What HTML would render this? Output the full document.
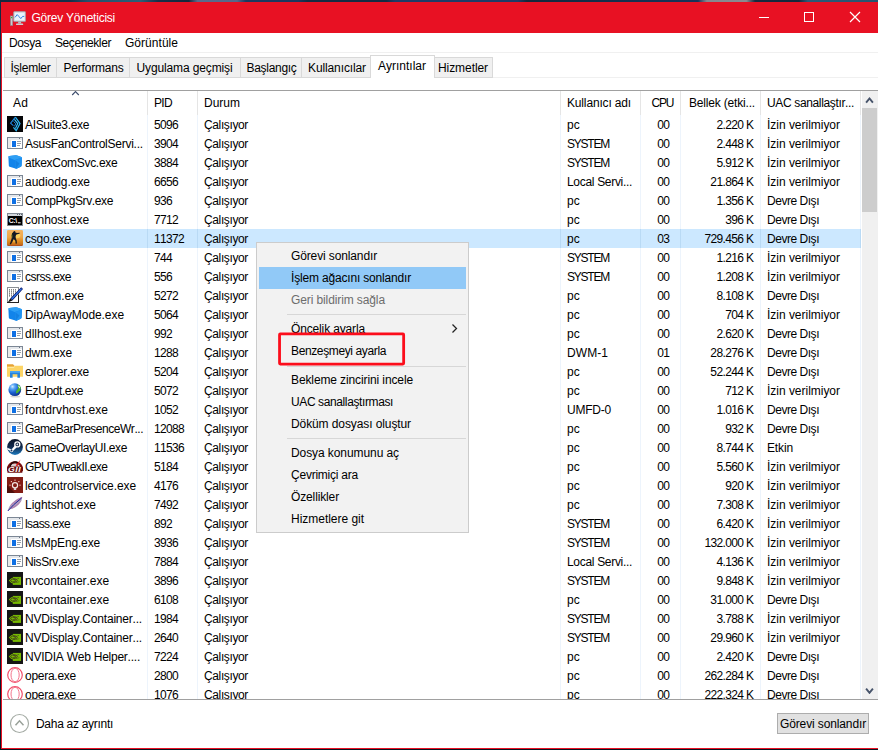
<!DOCTYPE html><html lang="tr"><head><meta charset="utf-8"><title>Görev Yöneticisi</title><style>
*{box-sizing:border-box}
html,body{margin:0;padding:0}
body{width:878px;height:750px;overflow:hidden;position:relative;background:#15304a;
 font-family:"Liberation Sans",sans-serif;font-size:12px;font-kerning:none;color:#000}
.a{position:absolute}
.t{position:absolute;white-space:nowrap;line-height:16px;height:16px}
.ic{position:absolute;display:block;overflow:hidden}
#bgtop{left:0;top:0;width:878px;height:2px;background:linear-gradient(90deg,#14293f 0,#15304a 8%,#24506c 10%,#2a6078 16%,#16304a 18%,#14283c 21.5%,#5a6b8c 22.5%,#56688a 27%,#1a3a60 28%,#1a3860 34%,#122c44 35%,#122c44 44%,#1e3c68 45%,#1e3c68 59%,#13283c 60%,#14304e 70%,#17345a 79.5%,#85878f 80.5%,#8a8a90 85%,#152a40 86%,#13283c 91%,#2a5a78 92%,#265470 100%)}
#bgleft{left:0;top:0;width:1px;height:750px;background:linear-gradient(180deg,#14293f 0,#163458 35%,#102a48 60%,#071624 100%)}
#bgbot{left:0;top:749px;width:878px;height:1px;background:#07131f}
#win{left:1px;top:2px;width:877px;height:747px;background:#fff}
#tb{left:1px;top:2px;width:877px;height:31px;background:#e81123}
#bl{left:1px;top:33px;width:1px;height:716px;background:#e81123}
#bb{left:1px;top:748px;width:877px;height:1px;background:#e81123}
.hl{position:absolute;height:1px}
.vl{position:absolute;width:1px}
.tab{position:absolute;top:57px;height:21px;background:#f0f0f0;border:1px solid #d9d9d9}
#list{left:3px;top:91px;width:858px;height:608px;overflow:hidden;background:#fff}
#menu{left:256px;top:242px;width:213px;height:291px;background:#f2f2f2;border:1px solid #ccc}
</style></head><body>
<div class="a" id="bgtop"></div><div class="a" id="bgleft"></div><div class="a" id="bgbot"></div>
<div class="a" id="win"></div>
<div class="a" id="tb"></div><div class="a" id="bl"></div><div class="a" id="bb"></div>
<svg class="ic" style="left:10px;top:11px" width="16" height="15" viewBox="0 0 16 15"><rect x="0.5" y="5" width="2.2" height="9.4" fill="#c9ccd0" stroke="#8c9096" stroke-width="0.6"/><rect x="1" y="6" width="1.2" height="1.2" fill="#3fae2a"/><rect x="3.6" y="0.6" width="12" height="10" rx="0.8" fill="#d5d9dd" stroke="#9aa0a6" stroke-width="0.7"/><rect x="4.8" y="1.8" width="9.6" height="7.4" fill="#e8f4fd"/><path d="M5 6.4 L7.2 3.6 L9 5.6 L10.8 7.6 L12.6 5.4 L14.2 5.4" fill="none" stroke="#2f7fe0" stroke-width="1"/><path d="M8.4 10.6 h2.4 l0.6 2 h-3.6z" fill="#b9bec4"/><rect x="6" y="12.6" width="7.2" height="1.4" rx="0.6" fill="#c9cdd2"/></svg>
<span class="t" style="top:9.5px;letter-spacing:-0.242px;color:#fff;left:31.5px;">Görev Yöneticisi</span>
<div class="a" style="left:759px;top:17px;width:10px;height:1px;background:#fff"></div>
<div class="a" style="left:804px;top:12px;width:10px;height:10px;border:1px solid #fff"></div>
<svg class="ic" style="left:849px;top:11px" width="12" height="12" viewBox="0 0 12 12"><path d="M1 1 L11 11 M11 1 L1 11" stroke="#fff" stroke-width="1.2" fill="none"/></svg>
<span class="t" style="top:34.5px;letter-spacing:-0.403px;left:9px;">Dosya</span>
<span class="t" style="top:34.5px;letter-spacing:-0.404px;left:55px;">Seçenekler</span>
<span class="t" style="top:34.5px;letter-spacing:0.033px;left:125px;">Görüntüle</span>
<div class="hl" style="left:2px;top:52px;width:876px;background:#f0f0f0"></div>
<div class="hl" style="left:2px;top:77px;width:876px;background:#f0f0f0"></div>
<div class="tab" style="left:4px;width:53px"></div>
<span class="t" style="top:59.5px;letter-spacing:-0.251px;left:10.5px;">İşlemler</span>
<div class="tab" style="left:56px;width:74px"></div>
<span class="t" style="top:59.5px;letter-spacing:-0.202px;left:63.5px;">Performans</span>
<div class="tab" style="left:129px;width:112px"></div>
<span class="t" style="top:59.5px;letter-spacing:-0.127px;left:136.5px;">Uygulama geçmişi</span>
<div class="tab" style="left:240px;width:62px"></div>
<span class="t" style="top:59.5px;letter-spacing:-0.3px;left:246.5px;">Başlangıç</span>
<div class="tab" style="left:301px;width:70px"></div>
<span class="t" style="top:59.5px;letter-spacing:-0.113px;left:308px;">Kullanıcılar</span>
<div class="tab" style="left:434px;width:59px"></div>
<span class="t" style="top:59.5px;letter-spacing:-0.075px;left:438px;">Hizmetler</span>
<div class="a" style="left:370px;top:55px;width:65px;height:23px;background:#fff;border:1px solid #d9d9d9;border-bottom:none"></div>
<span class="t" style="top:57.5px;letter-spacing:-0.001px;left:378px;">Ayrıntılar</span>
<div class="hl" style="left:3px;top:90px;width:875px;background:#a0a0a0"></div>
<div class="hl" style="left:3px;top:699px;width:875px;background:#a0a0a0"></div>
<div class="a" id="list">
<div class="a" style="left:-3px;top:-91px;width:878px;height:750px">
<div class="vl" style="left:147px;top:91px;height:24px;background:#e5e5e5"></div>
<div class="vl" style="left:147px;top:115px;height:584px;background:#edf4fc"></div>
<div class="vl" style="left:197px;top:91px;height:24px;background:#e5e5e5"></div>
<div class="vl" style="left:197px;top:115px;height:584px;background:#edf4fc"></div>
<div class="vl" style="left:560px;top:91px;height:24px;background:#e5e5e5"></div>
<div class="vl" style="left:560px;top:115px;height:584px;background:#edf4fc"></div>
<div class="vl" style="left:640px;top:91px;height:24px;background:#e5e5e5"></div>
<div class="vl" style="left:640px;top:115px;height:584px;background:#edf4fc"></div>
<div class="vl" style="left:680px;top:91px;height:24px;background:#e5e5e5"></div>
<div class="vl" style="left:680px;top:115px;height:584px;background:#edf4fc"></div>
<div class="vl" style="left:760px;top:91px;height:24px;background:#e5e5e5"></div>
<div class="vl" style="left:760px;top:115px;height:584px;background:#edf4fc"></div>
<div class="vl" style="left:860px;top:91px;height:24px;background:#e5e5e5"></div>
<div class="vl" style="left:860px;top:115px;height:584px;background:#edf4fc"></div>
<span class="t" style="top:94.5px;letter-spacing:0.161px;left:13px;">Ad</span>
<span class="t" style="top:94.5px;letter-spacing:-0.668px;left:154px;">PID</span>
<span class="t" style="top:94.5px;letter-spacing:-0.001px;left:204px;">Durum</span>
<span class="t" style="top:94.5px;letter-spacing:-0.157px;left:567px;">Kullanıcı adı</span>
<span class="t" style="top:94.5px;letter-spacing:-1.112px;right:204.612px;">CPU</span>
<span class="t" style="top:94.5px;letter-spacing:-0.179px;left:689px;">Bellek (etki...</span>
<span class="t" style="top:94.5px;letter-spacing:-0.354px;left:767px;">UAC sanallaştır...</span>
<svg class="ic" style="left:71px;top:91px" width="10" height="6" viewBox="0 0 10 6"><path d="M1.2 4 L4.5 0.6 L7.8 4" fill="none" stroke="#3d4c6c" stroke-width="1.15"/></svg>
<svg class="ic" style="left:7px;top:116px" width="16" height="16" viewBox="0 0 16 16"><rect width="16" height="16" fill="#050608"/><path d="M8.4 1.2 L3.6 7.2 L6.4 9.6" fill="none" stroke="#1f86e0" stroke-width="1.1"/><path d="M8.4 1.2 L13 7.6 L9.2 14.6 L6.4 11.4" fill="none" stroke="#2cb6f6" stroke-width="1.2"/><path d="M7.4 3.4 L10.8 7.6 L8.4 12.4" fill="none" stroke="#39c0fa" stroke-width="1.1"/><path d="M6.6 5.4 L8.8 7.8 L7.4 10.4" fill="none" stroke="#1f86e0" stroke-width="1"/></svg>
<span class="t" style="top:116.5px;letter-spacing:-0.337px;left:25px;">AISuite3.exe</span>
<span class="t" style="top:116.5px;letter-spacing:-0.674px;left:154px;">5096</span>
<span class="t" style="top:116.5px;letter-spacing:-0.372px;left:204px;">Çalışıyor</span>
<span class="t" style="top:116.5px;letter-spacing:0.163px;left:567px;">pc</span>
<span class="t" style="top:116.5px;letter-spacing:-0.674px;right:208.674px;">00</span>
<span class="t" style="top:116.5px;letter-spacing:-0.624px;right:124.624px;">2.220 K</span>
<span class="t" style="top:116.5px;letter-spacing:-0.023px;left:767px;">İzin verilmiyor</span>
<svg class="ic" style="left:7px;top:135px" width="16" height="16" viewBox="0 0 16 16"><g shape-rendering="crispEdges"><rect x="0" y="2" width="16" height="12" fill="#7c8795"/><rect x="1" y="3" width="14" height="10" fill="#fff"/><rect x="1" y="3" width="14" height="2" fill="#e4e7eb"/><rect x="1" y="5" width="3" height="8" fill="#e9e9e9"/><rect x="12" y="3" width="1" height="1" fill="#6a7380"/><rect x="5" y="6" width="4" height="6" fill="#0f70e4"/><rect x="10" y="6" width="4" height="1" fill="#98a0a8"/><rect x="10" y="8" width="4" height="1" fill="#98a0a8"/><rect x="10" y="10" width="3" height="1" fill="#98a0a8"/></g></svg>
<span class="t" style="top:135.5px;letter-spacing:-0.254px;left:25px;">AsusFanControlServi...</span>
<span class="t" style="top:135.5px;letter-spacing:-0.674px;left:154px;">3904</span>
<span class="t" style="top:135.5px;letter-spacing:-0.372px;left:204px;">Çalışıyor</span>
<span class="t" style="top:135.5px;letter-spacing:-1.224px;left:567px;">SYSTEM</span>
<span class="t" style="top:135.5px;letter-spacing:-0.674px;right:208.674px;">00</span>
<span class="t" style="top:135.5px;letter-spacing:-0.624px;right:124.624px;">2.448 K</span>
<span class="t" style="top:135.5px;letter-spacing:-0.023px;left:767px;">İzin verilmiyor</span>
<svg class="ic" style="left:7px;top:154px" width="16" height="16" viewBox="0 0 16 16"><path d="M1.4 3 Q1.4 2.2 2.4 2 L8.6 1.2 Q9.4 1.1 10.2 1.4 L14.4 3 Q15.1 3.3 15 4.2 L14.6 11.6 Q14.5 12.4 13.8 12.8 L10 14.6 Q9.2 14.9 8.4 14.6 L2.6 12.8 Q1.8 12.5 1.8 11.6Z" fill="#1284ea"/><path d="M1.4 3 Q1.4 2.2 2.4 2 L8.6 1.2 Q9.4 1.1 10.2 1.4 L14.4 3 Q15 3.3 14.8 3.8 L8.6 5.8 Q7.8 6 7 5.7 L1.6 3.6Z" fill="#2f9ff4"/><path d="M8 6 L14.9 3.8 L14.6 11.6 Q14.5 12.4 13.8 12.8 L10 14.6 Q9.2 14.9 8.6 14.7Z" fill="#1f93f2"/><path d="M8.4 6.2 L12.4 9.6 L9 14.4Z" fill="#1079dc" opacity="0.7"/></svg>
<span class="t" style="top:154.5px;letter-spacing:-0.287px;left:25px;">atkexComSvc.exe</span>
<span class="t" style="top:154.5px;letter-spacing:-0.674px;left:154px;">3884</span>
<span class="t" style="top:154.5px;letter-spacing:-0.372px;left:204px;">Çalışıyor</span>
<span class="t" style="top:154.5px;letter-spacing:-1.224px;left:567px;">SYSTEM</span>
<span class="t" style="top:154.5px;letter-spacing:-0.674px;right:208.674px;">00</span>
<span class="t" style="top:154.5px;letter-spacing:-0.624px;right:124.624px;">5.912 K</span>
<span class="t" style="top:154.5px;letter-spacing:-0.023px;left:767px;">İzin verilmiyor</span>
<svg class="ic" style="left:7px;top:173px" width="16" height="16" viewBox="0 0 16 16"><g shape-rendering="crispEdges"><rect x="0" y="2" width="16" height="12" fill="#7c8795"/><rect x="1" y="3" width="14" height="10" fill="#fff"/><rect x="1" y="3" width="14" height="2" fill="#e4e7eb"/><rect x="1" y="5" width="3" height="8" fill="#e9e9e9"/><rect x="12" y="3" width="1" height="1" fill="#6a7380"/><rect x="5" y="6" width="4" height="6" fill="#0f70e4"/><rect x="10" y="6" width="4" height="1" fill="#98a0a8"/><rect x="10" y="8" width="4" height="1" fill="#98a0a8"/><rect x="10" y="10" width="3" height="1" fill="#98a0a8"/></g></svg>
<span class="t" style="top:173.5px;letter-spacing:-0.036px;left:25px;">audiodg.exe</span>
<span class="t" style="top:173.5px;letter-spacing:-0.674px;left:154px;">6656</span>
<span class="t" style="top:173.5px;letter-spacing:-0.372px;left:204px;">Çalışıyor</span>
<span class="t" style="top:173.5px;letter-spacing:-0.312px;left:567px;">Local Servi...</span>
<span class="t" style="top:173.5px;letter-spacing:-0.674px;right:208.674px;">00</span>
<span class="t" style="top:173.5px;letter-spacing:-0.63px;right:124.63px;">21.864 K</span>
<span class="t" style="top:173.5px;letter-spacing:-0.023px;left:767px;">İzin verilmiyor</span>
<svg class="ic" style="left:7px;top:192px" width="16" height="16" viewBox="0 0 16 16"><g shape-rendering="crispEdges"><rect x="0" y="2" width="16" height="12" fill="#7c8795"/><rect x="1" y="3" width="14" height="10" fill="#fff"/><rect x="1" y="3" width="14" height="2" fill="#e4e7eb"/><rect x="1" y="5" width="3" height="8" fill="#e9e9e9"/><rect x="12" y="3" width="1" height="1" fill="#6a7380"/><rect x="5" y="6" width="4" height="6" fill="#0f70e4"/><rect x="10" y="6" width="4" height="1" fill="#98a0a8"/><rect x="10" y="8" width="4" height="1" fill="#98a0a8"/><rect x="10" y="10" width="3" height="1" fill="#98a0a8"/></g></svg>
<span class="t" style="top:192.5px;letter-spacing:-0.384px;left:25px;">CompPkgSrv.exe</span>
<span class="t" style="top:192.5px;letter-spacing:-0.674px;left:154px;">936</span>
<span class="t" style="top:192.5px;letter-spacing:-0.372px;left:204px;">Çalışıyor</span>
<span class="t" style="top:192.5px;letter-spacing:0.163px;left:567px;">pc</span>
<span class="t" style="top:192.5px;letter-spacing:-0.674px;right:208.674px;">00</span>
<span class="t" style="top:192.5px;letter-spacing:-0.624px;right:124.624px;">1.356 K</span>
<span class="t" style="top:192.5px;letter-spacing:-0.468px;left:767px;">Devre Dışı</span>
<svg class="ic" style="left:7px;top:211px" width="16" height="16" viewBox="0 0 16 16"><g shape-rendering="crispEdges"><rect x="0" y="2" width="16" height="13" fill="#828a94"/><rect x="1" y="3" width="14" height="2" fill="#d4d8dc"/><rect x="10" y="3" width="1" height="1" fill="#5c646e"/><rect x="12" y="3" width="1" height="1" fill="#5c646e"/><rect x="14" y="3" width="1" height="1" fill="#5c646e"/><rect x="1" y="5" width="14" height="9" fill="#000"/></g><text x="1.7" y="12" font-family="Liberation Sans, sans-serif" font-weight="bold" font-size="6.8" fill="#fff" letter-spacing="-0.25">C:\</text><rect x="11" y="11.3" width="2.6" height="1" fill="#fff"/></svg>
<span class="t" style="top:211.5px;letter-spacing:-0.065px;left:25px;">conhost.exe</span>
<span class="t" style="top:211.5px;letter-spacing:-0.674px;left:154px;">7712</span>
<span class="t" style="top:211.5px;letter-spacing:-0.372px;left:204px;">Çalışıyor</span>
<span class="t" style="top:211.5px;letter-spacing:0.163px;left:567px;">pc</span>
<span class="t" style="top:211.5px;letter-spacing:-0.674px;right:208.674px;">00</span>
<span class="t" style="top:211.5px;letter-spacing:-0.672px;right:124.672px;">396 K</span>
<span class="t" style="top:211.5px;letter-spacing:-0.468px;left:767px;">Devre Dışı</span>
<div class="a" style="left:3px;top:229px;width:858px;height:19px;background:#cce8ff"></div>
<div class="vl" style="left:147px;top:229px;height:19px;background:#b9daf5"></div>
<div class="vl" style="left:197px;top:229px;height:19px;background:#b9daf5"></div>
<div class="vl" style="left:560px;top:229px;height:19px;background:#b9daf5"></div>
<div class="vl" style="left:640px;top:229px;height:19px;background:#b9daf5"></div>
<div class="vl" style="left:680px;top:229px;height:19px;background:#b9daf5"></div>
<div class="vl" style="left:760px;top:229px;height:19px;background:#b9daf5"></div>
<div class="vl" style="left:860px;top:229px;height:19px;background:#b9daf5"></div>
<svg class="ic" style="left:7px;top:230px" width="16" height="16" viewBox="0 0 16 16"><defs><linearGradient id="csg" x1="0" y1="0" x2="0" y2="1"><stop offset="0" stop-color="#f4b462"/><stop offset="0.45" stop-color="#eea648"/><stop offset="0.7" stop-color="#dc8a22"/><stop offset="0.9" stop-color="#c8701c"/><stop offset="1" stop-color="#a84420"/></linearGradient></defs><rect width="16" height="16" rx="1.3" fill="url(#csg)"/><ellipse cx="10" cy="5.6" rx="3.4" ry="2.6" fill="#ffdc60" opacity="0.75"/><ellipse cx="5" cy="5" rx="1.4" ry="2.6" fill="#ffd458" opacity="0.6"/><ellipse cx="7.4" cy="11" rx="1.6" ry="1.6" fill="#ffd050" opacity="0.55"/><path d="M6.6 1.4 q0.9 -0.9 1.7 0 l0.1 1.1 l1.6 0.5 l2.6 -0.3 l0.2 0.7 l-2.4 0.8 l-1.3 0.6 l-0.5 1.8 l0.2 1.6 l0.9 2.2 l0.2 3.2 l-1.2 0.2 l-0.4 -3 l-1.6 -1.8 l-1.2 2.4 l-1.6 3 l-1.1 -0.4 l1.2 -3.4 l0.9 -3 l-0.2 -2 l0.2 -2.2 l1.2 -1.2z" fill="#131824"/><path d="M4.6 5 l1 -0.4 l0.2 2.8 l-1 0.4z" fill="#4a5a20"/></svg>
<span class="t" style="top:230.5px;letter-spacing:-0.254px;left:25px;">csgo.exe</span>
<span class="t" style="top:230.5px;letter-spacing:-0.674px;left:154px;">11372</span>
<span class="t" style="top:230.5px;letter-spacing:-0.372px;left:204px;">Çalışıyor</span>
<span class="t" style="top:230.5px;letter-spacing:0.163px;left:567px;">pc</span>
<span class="t" style="top:230.5px;letter-spacing:-0.674px;right:208.674px;">03</span>
<span class="t" style="top:230.5px;letter-spacing:-0.635px;right:124.635px;">729.456 K</span>
<span class="t" style="top:230.5px;letter-spacing:-0.468px;left:767px;">Devre Dışı</span>
<svg class="ic" style="left:7px;top:249px" width="16" height="16" viewBox="0 0 16 16"><g shape-rendering="crispEdges"><rect x="0" y="2" width="16" height="12" fill="#7c8795"/><rect x="1" y="3" width="14" height="10" fill="#fff"/><rect x="1" y="3" width="14" height="2" fill="#e4e7eb"/><rect x="1" y="5" width="3" height="8" fill="#e9e9e9"/><rect x="12" y="3" width="1" height="1" fill="#6a7380"/><rect x="5" y="6" width="4" height="6" fill="#0f70e4"/><rect x="10" y="6" width="4" height="1" fill="#98a0a8"/><rect x="10" y="8" width="4" height="1" fill="#98a0a8"/><rect x="10" y="10" width="3" height="1" fill="#98a0a8"/></g></svg>
<span class="t" style="top:249.5px;letter-spacing:-0.52px;left:25px;">csrss.exe</span>
<span class="t" style="top:249.5px;letter-spacing:-0.674px;left:154px;">744</span>
<span class="t" style="top:249.5px;letter-spacing:-0.372px;left:204px;">Çalışıyor</span>
<span class="t" style="top:249.5px;letter-spacing:-1.224px;left:567px;">SYSTEM</span>
<span class="t" style="top:249.5px;letter-spacing:-0.674px;right:208.674px;">00</span>
<span class="t" style="top:249.5px;letter-spacing:-0.624px;right:124.624px;">1.216 K</span>
<span class="t" style="top:249.5px;letter-spacing:-0.023px;left:767px;">İzin verilmiyor</span>
<svg class="ic" style="left:7px;top:268px" width="16" height="16" viewBox="0 0 16 16"><g shape-rendering="crispEdges"><rect x="0" y="2" width="16" height="12" fill="#7c8795"/><rect x="1" y="3" width="14" height="10" fill="#fff"/><rect x="1" y="3" width="14" height="2" fill="#e4e7eb"/><rect x="1" y="5" width="3" height="8" fill="#e9e9e9"/><rect x="12" y="3" width="1" height="1" fill="#6a7380"/><rect x="5" y="6" width="4" height="6" fill="#0f70e4"/><rect x="10" y="6" width="4" height="1" fill="#98a0a8"/><rect x="10" y="8" width="4" height="1" fill="#98a0a8"/><rect x="10" y="10" width="3" height="1" fill="#98a0a8"/></g></svg>
<span class="t" style="top:268.5px;letter-spacing:-0.52px;left:25px;">csrss.exe</span>
<span class="t" style="top:268.5px;letter-spacing:-0.674px;left:154px;">556</span>
<span class="t" style="top:268.5px;letter-spacing:-0.372px;left:204px;">Çalışıyor</span>
<span class="t" style="top:268.5px;letter-spacing:-1.224px;left:567px;">SYSTEM</span>
<span class="t" style="top:268.5px;letter-spacing:-0.674px;right:208.674px;">00</span>
<span class="t" style="top:268.5px;letter-spacing:-0.624px;right:124.624px;">1.208 K</span>
<span class="t" style="top:268.5px;letter-spacing:-0.023px;left:767px;">İzin verilmiyor</span>
<svg class="ic" style="left:7px;top:287px" width="16" height="16" viewBox="0 0 16 16"><rect x="0.5" y="0.5" width="11" height="15" fill="#fff" stroke="#8a8e94"/><path d="M0 15.5 H12 M11.5 8 V16" stroke="#222" stroke-width="1" fill="none"/><rect x="2" y="2.4" width="1" height="1" fill="#333"/><rect x="2" y="4.4" width="1" height="1" fill="#333"/><rect x="2" y="6.4" width="1" height="1" fill="#333"/><rect x="2" y="8.4" width="1" height="1" fill="#333"/><rect x="4" y="2.4" width="1" height="1" fill="#333"/><rect x="4" y="4.4" width="1" height="1" fill="#333"/><rect x="4" y="6.4" width="1" height="1" fill="#333"/><rect x="4" y="8.4" width="1" height="1" fill="#333"/><rect x="6" y="2.4" width="1" height="1" fill="#333"/><rect x="6" y="4.4" width="1" height="1" fill="#333"/><rect x="6" y="6.4" width="1" height="1" fill="#333"/><rect x="6" y="8.4" width="1" height="1" fill="#333"/><rect x="8" y="2.4" width="1" height="1" fill="#333"/><rect x="8" y="4.4" width="1" height="1" fill="#333"/><rect x="8" y="6.4" width="1" height="1" fill="#333"/><rect x="8" y="8.4" width="1" height="1" fill="#333"/><path d="M14.2 0.2 L16 2 L5.4 13.4 L3.2 11.4Z" fill="#0c1868"/><path d="M14.6 1.6 L4.8 12" stroke="#2f7af2" stroke-width="1.1" fill="none"/><path d="M3.2 11.4 L5.4 13.4 L0.8 15.4Z" fill="#0a0a0a"/></svg>
<span class="t" style="top:287.5px;letter-spacing:0.031px;left:25px;">ctfmon.exe</span>
<span class="t" style="top:287.5px;letter-spacing:-0.674px;left:154px;">5272</span>
<span class="t" style="top:287.5px;letter-spacing:-0.372px;left:204px;">Çalışıyor</span>
<span class="t" style="top:287.5px;letter-spacing:0.163px;left:567px;">pc</span>
<span class="t" style="top:287.5px;letter-spacing:-0.674px;right:208.674px;">00</span>
<span class="t" style="top:287.5px;letter-spacing:-0.624px;right:124.624px;">8.108 K</span>
<span class="t" style="top:287.5px;letter-spacing:-0.468px;left:767px;">Devre Dışı</span>
<svg class="ic" style="left:7px;top:306px" width="16" height="16" viewBox="0 0 16 16"><path d="M1.4 3 Q1.4 2.2 2.4 2 L8.6 1.2 Q9.4 1.1 10.2 1.4 L14.4 3 Q15.1 3.3 15 4.2 L14.6 11.6 Q14.5 12.4 13.8 12.8 L10 14.6 Q9.2 14.9 8.4 14.6 L2.6 12.8 Q1.8 12.5 1.8 11.6Z" fill="#1284ea"/><path d="M1.4 3 Q1.4 2.2 2.4 2 L8.6 1.2 Q9.4 1.1 10.2 1.4 L14.4 3 Q15 3.3 14.8 3.8 L8.6 5.8 Q7.8 6 7 5.7 L1.6 3.6Z" fill="#2f9ff4"/><path d="M8 6 L14.9 3.8 L14.6 11.6 Q14.5 12.4 13.8 12.8 L10 14.6 Q9.2 14.9 8.6 14.7Z" fill="#1f93f2"/><path d="M8.4 6.2 L12.4 9.6 L9 14.4Z" fill="#1079dc" opacity="0.7"/></svg>
<span class="t" style="top:306.5px;letter-spacing:-0.07px;left:25px;">DipAwayMode.exe</span>
<span class="t" style="top:306.5px;letter-spacing:-0.674px;left:154px;">5064</span>
<span class="t" style="top:306.5px;letter-spacing:-0.372px;left:204px;">Çalışıyor</span>
<span class="t" style="top:306.5px;letter-spacing:0.163px;left:567px;">pc</span>
<span class="t" style="top:306.5px;letter-spacing:-0.674px;right:208.674px;">00</span>
<span class="t" style="top:306.5px;letter-spacing:-0.672px;right:124.672px;">704 K</span>
<span class="t" style="top:306.5px;letter-spacing:-0.023px;left:767px;">İzin verilmiyor</span>
<svg class="ic" style="left:7px;top:325px" width="16" height="16" viewBox="0 0 16 16"><g shape-rendering="crispEdges"><rect x="0" y="2" width="16" height="12" fill="#7c8795"/><rect x="1" y="3" width="14" height="10" fill="#fff"/><rect x="1" y="3" width="14" height="2" fill="#e4e7eb"/><rect x="1" y="5" width="3" height="8" fill="#e9e9e9"/><rect x="12" y="3" width="1" height="1" fill="#6a7380"/><rect x="5" y="6" width="4" height="6" fill="#0f70e4"/><rect x="10" y="6" width="4" height="1" fill="#98a0a8"/><rect x="10" y="8" width="4" height="1" fill="#98a0a8"/><rect x="10" y="10" width="3" height="1" fill="#98a0a8"/></g></svg>
<span class="t" style="top:325.5px;letter-spacing:-0.034px;left:25px;">dllhost.exe</span>
<span class="t" style="top:325.5px;letter-spacing:-0.674px;left:154px;">992</span>
<span class="t" style="top:325.5px;letter-spacing:-0.372px;left:204px;">Çalışıyor</span>
<span class="t" style="top:325.5px;letter-spacing:0.163px;left:567px;">pc</span>
<span class="t" style="top:325.5px;letter-spacing:-0.674px;right:208.674px;">00</span>
<span class="t" style="top:325.5px;letter-spacing:-0.624px;right:124.624px;">2.620 K</span>
<span class="t" style="top:325.5px;letter-spacing:-0.468px;left:767px;">Devre Dışı</span>
<svg class="ic" style="left:7px;top:344px" width="16" height="16" viewBox="0 0 16 16"><g shape-rendering="crispEdges"><rect x="0" y="2" width="16" height="12" fill="#7c8795"/><rect x="1" y="3" width="14" height="10" fill="#fff"/><rect x="1" y="3" width="14" height="2" fill="#e4e7eb"/><rect x="1" y="5" width="3" height="8" fill="#e9e9e9"/><rect x="12" y="3" width="1" height="1" fill="#6a7380"/><rect x="5" y="6" width="4" height="6" fill="#0f70e4"/><rect x="10" y="6" width="4" height="1" fill="#98a0a8"/><rect x="10" y="8" width="4" height="1" fill="#98a0a8"/><rect x="10" y="10" width="3" height="1" fill="#98a0a8"/></g></svg>
<span class="t" style="top:344.5px;letter-spacing:-0.145px;left:25px;">dwm.exe</span>
<span class="t" style="top:344.5px;letter-spacing:-0.674px;left:154px;">1288</span>
<span class="t" style="top:344.5px;letter-spacing:-0.372px;left:204px;">Çalışıyor</span>
<span class="t" style="top:344.5px;letter-spacing:0.068px;left:567px;">DWM-1</span>
<span class="t" style="top:344.5px;letter-spacing:-0.674px;right:208.674px;">01</span>
<span class="t" style="top:344.5px;letter-spacing:-0.63px;right:124.63px;">28.276 K</span>
<span class="t" style="top:344.5px;letter-spacing:-0.468px;left:767px;">Devre Dışı</span>
<svg class="ic" style="left:7px;top:363px" width="16" height="16" viewBox="0 0 16 16"><path d="M0 1.2 h6 l1.2 1.4 v2 h-7.2z" fill="#e6a235"/><path d="M0 3.6 h7.4 l0.8 -0.8 h7.8 v11 h-16z" fill="#fcd465"/><path d="M0.8 4.4 h6.4" stroke="#fff2c0" stroke-width="0.7"/><path d="M3 8 h10 v6.8 h-2.6 v-3.6 h-4.8 v3.6 h-2.6z" fill="#2583dc"/><path d="M3 8 h10 v1.8 h-10z" fill="#4aa6f2"/></svg>
<span class="t" style="top:363.5px;letter-spacing:-0.17px;left:25px;">explorer.exe</span>
<span class="t" style="top:363.5px;letter-spacing:-0.674px;left:154px;">5204</span>
<span class="t" style="top:363.5px;letter-spacing:-0.372px;left:204px;">Çalışıyor</span>
<span class="t" style="top:363.5px;letter-spacing:0.163px;left:567px;">pc</span>
<span class="t" style="top:363.5px;letter-spacing:-0.674px;right:208.674px;">00</span>
<span class="t" style="top:363.5px;letter-spacing:-0.63px;right:124.63px;">52.244 K</span>
<span class="t" style="top:363.5px;letter-spacing:-0.468px;left:767px;">Devre Dışı</span>
<svg class="ic" style="left:7px;top:382px" width="16" height="16" viewBox="0 0 16 16"><defs><radialGradient id="glg" cx="0.32" cy="0.26" r="0.85"><stop offset="0" stop-color="#d8ecff"/><stop offset="0.22" stop-color="#5aa8f5"/><stop offset="0.55" stop-color="#1a5fd0"/><stop offset="1" stop-color="#0a2a80"/></radialGradient></defs><ellipse cx="8.4" cy="14.6" rx="5" ry="1" fill="#b8b8b8" opacity="0.6"/><circle cx="7.8" cy="7.7" r="6.4" fill="url(#glg)"/><path d="M10.4 2.2 Q12.8 3.2 13.8 5.6 L13.4 8.4 Q12 9 11.2 10.4 L9.4 11.6 Q8.6 10.4 9.2 9 Q9.8 7.6 11 6.8 Q11.6 5.4 10.8 4.2Z" fill="#4fb52e"/><path d="M11.6 3.4 Q12.8 4.4 13.2 5.8 L12.2 6.6 Q12 5 11.2 4.2Z" fill="#e9f7c8"/></svg>
<span class="t" style="top:382.5px;letter-spacing:-0.403px;left:25px;">EzUpdt.exe</span>
<span class="t" style="top:382.5px;letter-spacing:-0.674px;left:154px;">5072</span>
<span class="t" style="top:382.5px;letter-spacing:-0.372px;left:204px;">Çalışıyor</span>
<span class="t" style="top:382.5px;letter-spacing:0.163px;left:567px;">pc</span>
<span class="t" style="top:382.5px;letter-spacing:-0.674px;right:208.674px;">00</span>
<span class="t" style="top:382.5px;letter-spacing:-0.672px;right:124.672px;">712 K</span>
<span class="t" style="top:382.5px;letter-spacing:-0.023px;left:767px;">İzin verilmiyor</span>
<svg class="ic" style="left:7px;top:401px" width="16" height="16" viewBox="0 0 16 16"><g shape-rendering="crispEdges"><rect x="0" y="2" width="16" height="12" fill="#7c8795"/><rect x="1" y="3" width="14" height="10" fill="#fff"/><rect x="1" y="3" width="14" height="2" fill="#e4e7eb"/><rect x="1" y="5" width="3" height="8" fill="#e9e9e9"/><rect x="12" y="3" width="1" height="1" fill="#6a7380"/><rect x="5" y="6" width="4" height="6" fill="#0f70e4"/><rect x="10" y="6" width="4" height="1" fill="#98a0a8"/><rect x="10" y="8" width="4" height="1" fill="#98a0a8"/><rect x="10" y="10" width="3" height="1" fill="#98a0a8"/></g></svg>
<span class="t" style="top:401.5px;letter-spacing:0.063px;left:25px;">fontdrvhost.exe</span>
<span class="t" style="top:401.5px;letter-spacing:-0.674px;left:154px;">1052</span>
<span class="t" style="top:401.5px;letter-spacing:-0.372px;left:204px;">Çalışıyor</span>
<span class="t" style="top:401.5px;letter-spacing:-0.221px;left:567px;">UMFD-0</span>
<span class="t" style="top:401.5px;letter-spacing:-0.674px;right:208.674px;">00</span>
<span class="t" style="top:401.5px;letter-spacing:-0.624px;right:124.624px;">1.016 K</span>
<span class="t" style="top:401.5px;letter-spacing:-0.468px;left:767px;">Devre Dışı</span>
<svg class="ic" style="left:7px;top:420px" width="16" height="16" viewBox="0 0 16 16"><g shape-rendering="crispEdges"><rect x="0" y="2" width="16" height="12" fill="#7c8795"/><rect x="1" y="3" width="14" height="10" fill="#fff"/><rect x="1" y="3" width="14" height="2" fill="#e4e7eb"/><rect x="1" y="5" width="3" height="8" fill="#e9e9e9"/><rect x="12" y="3" width="1" height="1" fill="#6a7380"/><rect x="5" y="6" width="4" height="6" fill="#0f70e4"/><rect x="10" y="6" width="4" height="1" fill="#98a0a8"/><rect x="10" y="8" width="4" height="1" fill="#98a0a8"/><rect x="10" y="10" width="3" height="1" fill="#98a0a8"/></g></svg>
<span class="t" style="top:420.5px;letter-spacing:-0.469px;left:25px;">GameBarPresenceWr...</span>
<span class="t" style="top:420.5px;letter-spacing:-0.674px;left:154px;">12088</span>
<span class="t" style="top:420.5px;letter-spacing:-0.372px;left:204px;">Çalışıyor</span>
<span class="t" style="top:420.5px;letter-spacing:0.163px;left:567px;">pc</span>
<span class="t" style="top:420.5px;letter-spacing:-0.674px;right:208.674px;">00</span>
<span class="t" style="top:420.5px;letter-spacing:-0.672px;right:124.672px;">932 K</span>
<span class="t" style="top:420.5px;letter-spacing:-0.468px;left:767px;">Devre Dışı</span>
<svg class="ic" style="left:7px;top:439px" width="16" height="16" viewBox="0 0 16 16"><defs><linearGradient id="stg" x1="0" y1="0" x2="0" y2="1"><stop offset="0" stop-color="#0b1426"/><stop offset="0.5" stop-color="#112a4e"/><stop offset="1" stop-color="#1c78bc"/></linearGradient></defs><circle cx="8" cy="8" r="7.9" fill="url(#stg)"/><circle cx="10.3" cy="5.4" r="2.5" fill="none" stroke="#fff" stroke-width="1.3"/><circle cx="10.3" cy="5.4" r="0.9" fill="#e8eef5"/><path d="M0.3 8.8 L4.6 10.4 L7.8 6.6 L9.6 8.6 L6.4 11.4 Q6 13.4 4.2 13.1 Q2.8 12.8 2.8 11.4 L0.5 10.4Z" fill="#fff"/><circle cx="4.5" cy="11.6" r="1" fill="#14305a"/></svg>
<span class="t" style="top:439.5px;letter-spacing:-0.394px;left:25px;">GameOverlayUI.exe</span>
<span class="t" style="top:439.5px;letter-spacing:-0.674px;left:154px;">11536</span>
<span class="t" style="top:439.5px;letter-spacing:-0.372px;left:204px;">Çalışıyor</span>
<span class="t" style="top:439.5px;letter-spacing:0.163px;left:567px;">pc</span>
<span class="t" style="top:439.5px;letter-spacing:-0.674px;right:208.674px;">00</span>
<span class="t" style="top:439.5px;letter-spacing:-0.624px;right:124.624px;">8.744 K</span>
<span class="t" style="top:439.5px;letter-spacing:-0.136px;left:767px;">Etkin</span>
<svg class="ic" style="left:7px;top:458px" width="16" height="16" viewBox="0 0 16 16"><path d="M1.2 13 A7 7 0 1 1 14.8 13" fill="#d8d0d0" stroke="#7a0e0e" stroke-width="2.2"/><path d="M3.6 10 A4.6 4.6 0 0 1 11 5.2" fill="none" stroke="#1a0a0a" stroke-width="1.2"/><path d="M8.6 7.4 L13.6 1.4 L10.4 8.2Z" fill="#e01818"/><rect x="0.4" y="8.6" width="15" height="6.2" rx="0.6" fill="#6a0c0c"/><text x="0.9" y="14.2" font-family="Liberation Sans, sans-serif" font-weight="bold" font-style="italic" font-size="7.6" fill="#fff" letter-spacing="0.5" textLength="13.4" lengthAdjust="spacingAndGlyphs">GII</text></svg>
<span class="t" style="top:458.5px;letter-spacing:-0.607px;left:25px;">GPUTweakII.exe</span>
<span class="t" style="top:458.5px;letter-spacing:-0.674px;left:154px;">5184</span>
<span class="t" style="top:458.5px;letter-spacing:-0.372px;left:204px;">Çalışıyor</span>
<span class="t" style="top:458.5px;letter-spacing:0.163px;left:567px;">pc</span>
<span class="t" style="top:458.5px;letter-spacing:-0.674px;right:208.674px;">00</span>
<span class="t" style="top:458.5px;letter-spacing:-0.624px;right:124.624px;">5.560 K</span>
<span class="t" style="top:458.5px;letter-spacing:-0.023px;left:767px;">İzin verilmiyor</span>
<svg class="ic" style="left:7px;top:477px" width="16" height="16" viewBox="0 0 16 16"><rect width="16" height="16" fill="#821c14"/><path d="M0 8 L8 16 H0Z" fill="#4e0e0a"/><circle cx="8" cy="8.2" r="2.6" fill="none" stroke="#f2e4e0" stroke-width="1.2"/><rect x="6.8" y="10.6" width="2.4" height="2.4" fill="#d9d0d0"/><rect x="7.4" y="2.6" width="1.2" height="1.2" fill="#e8c0b8"/><rect x="2.4" y="7.6" width="1.2" height="1.2" fill="#e8c0b8"/><rect x="12.4" y="7.6" width="1.2" height="1.2" fill="#e8c0b8"/><rect x="3.8" y="4" width="1.2" height="1.2" fill="#e8c0b8"/><rect x="11.2" y="4" width="1.2" height="1.2" fill="#e8c0b8"/></svg>
<span class="t" style="top:477.5px;letter-spacing:-0.082px;left:25px;">ledcontrolservice.exe</span>
<span class="t" style="top:477.5px;letter-spacing:-0.674px;left:154px;">4176</span>
<span class="t" style="top:477.5px;letter-spacing:-0.372px;left:204px;">Çalışıyor</span>
<span class="t" style="top:477.5px;letter-spacing:0.163px;left:567px;">pc</span>
<span class="t" style="top:477.5px;letter-spacing:-0.674px;right:208.674px;">00</span>
<span class="t" style="top:477.5px;letter-spacing:-0.672px;right:124.672px;">920 K</span>
<span class="t" style="top:477.5px;letter-spacing:-0.023px;left:767px;">İzin verilmiyor</span>
<svg class="ic" style="left:7px;top:496px" width="16" height="16" viewBox="0 0 16 16"><path d="M1 14.8 Q1.2 11.2 5 7 Q9.2 2.6 15.2 0.8 Q15.6 4.6 11.8 8.6 Q7.8 12.6 2.6 13.4 Z" fill="#a99dbd"/><path d="M3.4 9.4 Q8 4.6 14.8 1.4 M4.6 12.4 Q10.4 9.4 13.6 5.6" fill="none" stroke="#c2609e" stroke-width="0.8" opacity="0.75"/><path d="M0.8 15 Q5.6 9 14.6 2" fill="none" stroke="#2a1f9a" stroke-width="1"/></svg>
<span class="t" style="top:496.5px;letter-spacing:-0.03px;left:25px;">Lightshot.exe</span>
<span class="t" style="top:496.5px;letter-spacing:-0.674px;left:154px;">7492</span>
<span class="t" style="top:496.5px;letter-spacing:-0.372px;left:204px;">Çalışıyor</span>
<span class="t" style="top:496.5px;letter-spacing:0.163px;left:567px;">pc</span>
<span class="t" style="top:496.5px;letter-spacing:-0.674px;right:208.674px;">00</span>
<span class="t" style="top:496.5px;letter-spacing:-0.624px;right:124.624px;">7.308 K</span>
<span class="t" style="top:496.5px;letter-spacing:-0.023px;left:767px;">İzin verilmiyor</span>
<svg class="ic" style="left:7px;top:515px" width="16" height="16" viewBox="0 0 16 16"><g shape-rendering="crispEdges"><rect x="0" y="2" width="16" height="12" fill="#7c8795"/><rect x="1" y="3" width="14" height="10" fill="#fff"/><rect x="1" y="3" width="14" height="2" fill="#e4e7eb"/><rect x="1" y="5" width="3" height="8" fill="#e9e9e9"/><rect x="12" y="3" width="1" height="1" fill="#6a7380"/><rect x="5" y="6" width="4" height="6" fill="#0f70e4"/><rect x="10" y="6" width="4" height="1" fill="#98a0a8"/><rect x="10" y="8" width="4" height="1" fill="#98a0a8"/><rect x="10" y="10" width="3" height="1" fill="#98a0a8"/></g></svg>
<span class="t" style="top:515.5px;letter-spacing:-0.558px;left:25px;">lsass.exe</span>
<span class="t" style="top:515.5px;letter-spacing:-0.674px;left:154px;">892</span>
<span class="t" style="top:515.5px;letter-spacing:-0.372px;left:204px;">Çalışıyor</span>
<span class="t" style="top:515.5px;letter-spacing:-1.224px;left:567px;">SYSTEM</span>
<span class="t" style="top:515.5px;letter-spacing:-0.674px;right:208.674px;">00</span>
<span class="t" style="top:515.5px;letter-spacing:-0.624px;right:124.624px;">6.420 K</span>
<span class="t" style="top:515.5px;letter-spacing:-0.023px;left:767px;">İzin verilmiyor</span>
<svg class="ic" style="left:7px;top:534px" width="16" height="16" viewBox="0 0 16 16"><g shape-rendering="crispEdges"><rect x="0" y="2" width="16" height="12" fill="#7c8795"/><rect x="1" y="3" width="14" height="10" fill="#fff"/><rect x="1" y="3" width="14" height="2" fill="#e4e7eb"/><rect x="1" y="5" width="3" height="8" fill="#e9e9e9"/><rect x="12" y="3" width="1" height="1" fill="#6a7380"/><rect x="5" y="6" width="4" height="6" fill="#0f70e4"/><rect x="10" y="6" width="4" height="1" fill="#98a0a8"/><rect x="10" y="8" width="4" height="1" fill="#98a0a8"/><rect x="10" y="10" width="3" height="1" fill="#98a0a8"/></g></svg>
<span class="t" style="top:534.5px;letter-spacing:-0.155px;left:25px;">MsMpEng.exe</span>
<span class="t" style="top:534.5px;letter-spacing:-0.674px;left:154px;">3936</span>
<span class="t" style="top:534.5px;letter-spacing:-0.372px;left:204px;">Çalışıyor</span>
<span class="t" style="top:534.5px;letter-spacing:-1.224px;left:567px;">SYSTEM</span>
<span class="t" style="top:534.5px;letter-spacing:-0.674px;right:208.674px;">00</span>
<span class="t" style="top:534.5px;letter-spacing:-0.635px;right:124.635px;">132.000 K</span>
<span class="t" style="top:534.5px;letter-spacing:-0.023px;left:767px;">İzin verilmiyor</span>
<svg class="ic" style="left:7px;top:553px" width="16" height="16" viewBox="0 0 16 16"><g shape-rendering="crispEdges"><rect x="0" y="2" width="16" height="12" fill="#7c8795"/><rect x="1" y="3" width="14" height="10" fill="#fff"/><rect x="1" y="3" width="14" height="2" fill="#e4e7eb"/><rect x="1" y="5" width="3" height="8" fill="#e9e9e9"/><rect x="12" y="3" width="1" height="1" fill="#6a7380"/><rect x="5" y="6" width="4" height="6" fill="#0f70e4"/><rect x="10" y="6" width="4" height="1" fill="#98a0a8"/><rect x="10" y="8" width="4" height="1" fill="#98a0a8"/><rect x="10" y="10" width="3" height="1" fill="#98a0a8"/></g></svg>
<span class="t" style="top:553.5px;letter-spacing:-0.401px;left:25px;">NisSrv.exe</span>
<span class="t" style="top:553.5px;letter-spacing:-0.674px;left:154px;">7884</span>
<span class="t" style="top:553.5px;letter-spacing:-0.372px;left:204px;">Çalışıyor</span>
<span class="t" style="top:553.5px;letter-spacing:-0.312px;left:567px;">Local Servi...</span>
<span class="t" style="top:553.5px;letter-spacing:-0.674px;right:208.674px;">00</span>
<span class="t" style="top:553.5px;letter-spacing:-0.624px;right:124.624px;">4.136 K</span>
<span class="t" style="top:553.5px;letter-spacing:-0.023px;left:767px;">İzin verilmiyor</span>
<svg class="ic" style="left:7px;top:572px" width="16" height="16" viewBox="0 0 16 16"><rect width="16" height="16" fill="#151515"/><g transform="translate(0,0.9)"><rect x="5.8" y="4" width="8.2" height="8" fill="#76b900"/><path d="M1.8 7.6 Q4 4.6 7.4 4.6 Q10.4 4.8 12 7.2 Q10.6 10.6 7.2 10.8 Q3.8 10.6 1.8 7.6z" fill="#76b900"/><path d="M3.4 7.6 Q5 5.8 7.4 5.8 Q9.4 6 10.4 7.4 Q9.4 9.4 7.2 9.6 Q4.8 9.4 3.4 7.6z" fill="none" stroke="#3a2a20" stroke-width="0.8"/><path d="M6 6 Q8.6 6.6 8.4 8.2 Q7.6 9.2 6.4 8.6" fill="none" stroke="#3a2a20" stroke-width="0.8"/><path d="M8 7 L12 5.4 M9 9.6 L12.4 8.8" stroke="#4a3a2a" stroke-width="0.6"/></g></svg>
<span class="t" style="top:572.5px;letter-spacing:-0.048px;left:25px;">nvcontainer.exe</span>
<span class="t" style="top:572.5px;letter-spacing:-0.674px;left:154px;">3896</span>
<span class="t" style="top:572.5px;letter-spacing:-0.372px;left:204px;">Çalışıyor</span>
<span class="t" style="top:572.5px;letter-spacing:-1.224px;left:567px;">SYSTEM</span>
<span class="t" style="top:572.5px;letter-spacing:-0.674px;right:208.674px;">00</span>
<span class="t" style="top:572.5px;letter-spacing:-0.624px;right:124.624px;">9.848 K</span>
<span class="t" style="top:572.5px;letter-spacing:-0.023px;left:767px;">İzin verilmiyor</span>
<svg class="ic" style="left:7px;top:591px" width="16" height="16" viewBox="0 0 16 16"><rect width="16" height="16" fill="#151515"/><g transform="translate(0,0.9)"><rect x="5.8" y="4" width="8.2" height="8" fill="#76b900"/><path d="M1.8 7.6 Q4 4.6 7.4 4.6 Q10.4 4.8 12 7.2 Q10.6 10.6 7.2 10.8 Q3.8 10.6 1.8 7.6z" fill="#76b900"/><path d="M3.4 7.6 Q5 5.8 7.4 5.8 Q9.4 6 10.4 7.4 Q9.4 9.4 7.2 9.6 Q4.8 9.4 3.4 7.6z" fill="none" stroke="#3a2a20" stroke-width="0.8"/><path d="M6 6 Q8.6 6.6 8.4 8.2 Q7.6 9.2 6.4 8.6" fill="none" stroke="#3a2a20" stroke-width="0.8"/><path d="M8 7 L12 5.4 M9 9.6 L12.4 8.8" stroke="#4a3a2a" stroke-width="0.6"/></g></svg>
<span class="t" style="top:591.5px;letter-spacing:-0.048px;left:25px;">nvcontainer.exe</span>
<span class="t" style="top:591.5px;letter-spacing:-0.674px;left:154px;">6108</span>
<span class="t" style="top:591.5px;letter-spacing:-0.372px;left:204px;">Çalışıyor</span>
<span class="t" style="top:591.5px;letter-spacing:0.163px;left:567px;">pc</span>
<span class="t" style="top:591.5px;letter-spacing:-0.674px;right:208.674px;">00</span>
<span class="t" style="top:591.5px;letter-spacing:-0.63px;right:124.63px;">31.000 K</span>
<span class="t" style="top:591.5px;letter-spacing:-0.468px;left:767px;">Devre Dışı</span>
<svg class="ic" style="left:7px;top:610px" width="16" height="16" viewBox="0 0 16 16"><rect width="16" height="16" fill="#151515"/><g transform="translate(0,0.9)"><rect x="5.8" y="4" width="8.2" height="8" fill="#76b900"/><path d="M1.8 7.6 Q4 4.6 7.4 4.6 Q10.4 4.8 12 7.2 Q10.6 10.6 7.2 10.8 Q3.8 10.6 1.8 7.6z" fill="#76b900"/><path d="M3.4 7.6 Q5 5.8 7.4 5.8 Q9.4 6 10.4 7.4 Q9.4 9.4 7.2 9.6 Q4.8 9.4 3.4 7.6z" fill="none" stroke="#3a2a20" stroke-width="0.8"/><path d="M6 6 Q8.6 6.6 8.4 8.2 Q7.6 9.2 6.4 8.6" fill="none" stroke="#3a2a20" stroke-width="0.8"/><path d="M8 7 L12 5.4 M9 9.6 L12.4 8.8" stroke="#4a3a2a" stroke-width="0.6"/></g></svg>
<span class="t" style="top:610.5px;letter-spacing:-0.199px;left:25px;">NVDisplay.Container...</span>
<span class="t" style="top:610.5px;letter-spacing:-0.674px;left:154px;">1984</span>
<span class="t" style="top:610.5px;letter-spacing:-0.372px;left:204px;">Çalışıyor</span>
<span class="t" style="top:610.5px;letter-spacing:-1.224px;left:567px;">SYSTEM</span>
<span class="t" style="top:610.5px;letter-spacing:-0.674px;right:208.674px;">00</span>
<span class="t" style="top:610.5px;letter-spacing:-0.624px;right:124.624px;">3.788 K</span>
<span class="t" style="top:610.5px;letter-spacing:-0.023px;left:767px;">İzin verilmiyor</span>
<svg class="ic" style="left:7px;top:629px" width="16" height="16" viewBox="0 0 16 16"><rect width="16" height="16" fill="#151515"/><g transform="translate(0,0.9)"><rect x="5.8" y="4" width="8.2" height="8" fill="#76b900"/><path d="M1.8 7.6 Q4 4.6 7.4 4.6 Q10.4 4.8 12 7.2 Q10.6 10.6 7.2 10.8 Q3.8 10.6 1.8 7.6z" fill="#76b900"/><path d="M3.4 7.6 Q5 5.8 7.4 5.8 Q9.4 6 10.4 7.4 Q9.4 9.4 7.2 9.6 Q4.8 9.4 3.4 7.6z" fill="none" stroke="#3a2a20" stroke-width="0.8"/><path d="M6 6 Q8.6 6.6 8.4 8.2 Q7.6 9.2 6.4 8.6" fill="none" stroke="#3a2a20" stroke-width="0.8"/><path d="M8 7 L12 5.4 M9 9.6 L12.4 8.8" stroke="#4a3a2a" stroke-width="0.6"/></g></svg>
<span class="t" style="top:629.5px;letter-spacing:-0.199px;left:25px;">NVDisplay.Container...</span>
<span class="t" style="top:629.5px;letter-spacing:-0.674px;left:154px;">2640</span>
<span class="t" style="top:629.5px;letter-spacing:-0.372px;left:204px;">Çalışıyor</span>
<span class="t" style="top:629.5px;letter-spacing:-1.224px;left:567px;">SYSTEM</span>
<span class="t" style="top:629.5px;letter-spacing:-0.674px;right:208.674px;">00</span>
<span class="t" style="top:629.5px;letter-spacing:-0.63px;right:124.63px;">29.960 K</span>
<span class="t" style="top:629.5px;letter-spacing:-0.023px;left:767px;">İzin verilmiyor</span>
<svg class="ic" style="left:7px;top:648px" width="16" height="16" viewBox="0 0 16 16"><rect width="16" height="16" fill="#151515"/><g transform="translate(0,0.9)"><rect x="5.8" y="4" width="8.2" height="8" fill="#76b900"/><path d="M1.8 7.6 Q4 4.6 7.4 4.6 Q10.4 4.8 12 7.2 Q10.6 10.6 7.2 10.8 Q3.8 10.6 1.8 7.6z" fill="#76b900"/><path d="M3.4 7.6 Q5 5.8 7.4 5.8 Q9.4 6 10.4 7.4 Q9.4 9.4 7.2 9.6 Q4.8 9.4 3.4 7.6z" fill="none" stroke="#3a2a20" stroke-width="0.8"/><path d="M6 6 Q8.6 6.6 8.4 8.2 Q7.6 9.2 6.4 8.6" fill="none" stroke="#3a2a20" stroke-width="0.8"/><path d="M8 7 L12 5.4 M9 9.6 L12.4 8.8" stroke="#4a3a2a" stroke-width="0.6"/></g></svg>
<span class="t" style="top:648.5px;letter-spacing:-0.24px;left:25px;">NVIDIA Web Helper....</span>
<span class="t" style="top:648.5px;letter-spacing:-0.674px;left:154px;">7224</span>
<span class="t" style="top:648.5px;letter-spacing:-0.372px;left:204px;">Çalışıyor</span>
<span class="t" style="top:648.5px;letter-spacing:0.163px;left:567px;">pc</span>
<span class="t" style="top:648.5px;letter-spacing:-0.674px;right:208.674px;">00</span>
<span class="t" style="top:648.5px;letter-spacing:-0.624px;right:124.624px;">2.420 K</span>
<span class="t" style="top:648.5px;letter-spacing:-0.468px;left:767px;">Devre Dışı</span>
<svg class="ic" style="left:7px;top:667px" width="16" height="16" viewBox="0 0 16 16"><circle cx="8" cy="8" r="7.3" fill="none" stroke="#f2506c" stroke-width="1.2"/><ellipse cx="8.1" cy="8" rx="4.1" ry="6.7" fill="none" stroke="#f4768c" stroke-width="1"/></svg>
<span class="t" style="top:667.5px;letter-spacing:-0.264px;left:25px;">opera.exe</span>
<span class="t" style="top:667.5px;letter-spacing:-0.674px;left:154px;">2800</span>
<span class="t" style="top:667.5px;letter-spacing:-0.372px;left:204px;">Çalışıyor</span>
<span class="t" style="top:667.5px;letter-spacing:0.163px;left:567px;">pc</span>
<span class="t" style="top:667.5px;letter-spacing:-0.674px;right:208.674px;">00</span>
<span class="t" style="top:667.5px;letter-spacing:-0.635px;right:124.635px;">262.284 K</span>
<span class="t" style="top:667.5px;letter-spacing:-0.468px;left:767px;">Devre Dışı</span>
<svg class="ic" style="left:7px;top:686px" width="16" height="16" viewBox="0 0 16 16"><circle cx="8" cy="8" r="7.3" fill="none" stroke="#f2506c" stroke-width="1.2"/><ellipse cx="8.1" cy="8" rx="4.1" ry="6.7" fill="none" stroke="#f4768c" stroke-width="1"/></svg>
<span class="t" style="top:686.5px;letter-spacing:-0.264px;left:25px;">opera.exe</span>
<span class="t" style="top:686.5px;letter-spacing:-0.674px;left:154px;">1076</span>
<span class="t" style="top:686.5px;letter-spacing:-0.372px;left:204px;">Çalışıyor</span>
<span class="t" style="top:686.5px;letter-spacing:0.163px;left:567px;">pc</span>
<span class="t" style="top:686.5px;letter-spacing:-0.674px;right:208.674px;">00</span>
<span class="t" style="top:686.5px;letter-spacing:-0.635px;right:124.635px;">222.324 K</span>
<span class="t" style="top:686.5px;letter-spacing:-0.468px;left:767px;">Devre Dışı</span>
</div></div>
<div class="a" style="left:862px;top:91px;width:16px;height:608px;background:#f0f0f0"></div>
<div class="a" style="left:862px;top:108px;width:15px;height:104px;background:#cdcdcd"></div>
<svg class="ic" style="left:865px;top:96px" width="9" height="8" viewBox="0 0 9 8"><path d="M1.1 6.6 L4.5 2.4 L7.9 6.6" fill="none" stroke="#46536a" stroke-width="1.9"/></svg>
<svg class="ic" style="left:865px;top:686px" width="9" height="8" viewBox="0 0 9 8"><path d="M1.1 2.6 L4.5 6.8 L7.9 2.6" fill="none" stroke="#46536a" stroke-width="1.9"/></svg>
<svg class="ic" style="left:9px;top:713px" width="21" height="21" viewBox="0 0 21 21"><circle cx="10.5" cy="10.5" r="9" fill="#fff" stroke="#a4aba4" stroke-width="1.15"/><path d="M6.5 12.3 L10.5 7.8 L14.5 12.3" fill="none" stroke="#99a199" stroke-width="1.5"/></svg>
<span class="t" style="top:715.5px;letter-spacing:-0.292px;left:36px;">Daha az ayrıntı</span>
<div class="a" style="left:777px;top:713px;width:92px;height:21px;background:#e1e1e1;border:1px solid #adadad"></div>
<span class="t" style="top:715.5px;letter-spacing:-0.128px;left:780px;">Görevi sonlandır</span>
<div class="a" id="menu"></div>
<div class="a" style="left:259px;top:267px;width:207px;height:22px;background:#91c9f7"></div>
<div class="hl" style="left:287px;top:314px;width:179px;background:#d7d7d7"></div>
<div class="hl" style="left:287px;top:366px;width:179px;background:#d7d7d7"></div>
<div class="hl" style="left:287px;top:438px;width:179px;background:#d7d7d7"></div>
<span class="t" style="top:248px;letter-spacing:-0.128px;left:291px;">Görevi sonlandır</span>
<span class="t" style="top:270px;letter-spacing:-0.177px;left:291px;">İşlem ağacını sonlandır</span>
<span class="t" style="top:292px;letter-spacing:-0.107px;color:#6d6d6d;left:291px;">Geri bildirim sağla</span>
<span class="t" style="top:321px;letter-spacing:-0.145px;left:291px;">Öncelik ayarla</span>
<span class="t" style="top:372px;letter-spacing:-0.113px;left:291px;">Bekleme zincirini incele</span>
<span class="t" style="top:394px;letter-spacing:-0.388px;left:291px;">UAC sanallaştırması</span>
<span class="t" style="top:416px;letter-spacing:-0.098px;left:291px;">Döküm dosyası oluştur</span>
<span class="t" style="top:445px;letter-spacing:-0.082px;left:291px;">Dosya konumunu aç</span>
<span class="t" style="top:467px;letter-spacing:-0.231px;left:291px;">Çevrimiçi ara</span>
<span class="t" style="top:489px;letter-spacing:-0.134px;left:291px;">Özellikler</span>
<span class="t" style="top:511px;letter-spacing:-0.025px;left:291px;">Hizmetlere git</span>
<svg class="ic" style="left:451px;top:323px" width="7" height="11" viewBox="0 0 7 11"><path d="M1.5 1.5 L5.5 5.5 L1.5 9.5" fill="none" stroke="#222" stroke-width="1.25"/></svg>
<svg class="ic" style="left:276px;top:331px" width="132" height="37" viewBox="0 0 132 37"><rect x="3.55" y="2.95" width="124.1" height="30.1" rx="0.7" fill="#f2f2f2" stroke="#fc0d1b" stroke-width="2.8"/></svg>
<span class="t" style="top:343px;letter-spacing:-0.375px;left:291px;">Benzeşmeyi ayarla</span>
</body></html>
